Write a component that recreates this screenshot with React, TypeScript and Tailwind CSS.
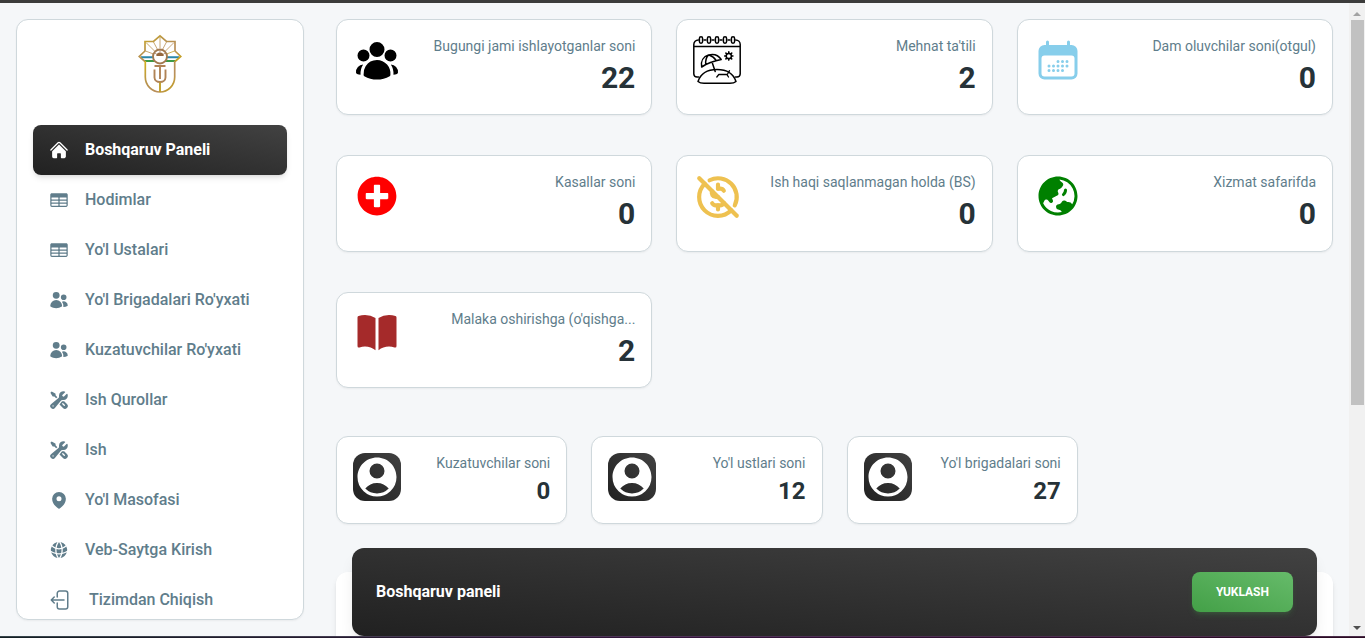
import React from "react";
import {
  HiHome,
  HiTableCells,
  HiUsers,
  HiWrenchScrewdriver,
  HiMapPin,
  HiUserGroup,
  HiCalendarDays,
  HiGlobeAsiaAustralia,
  HiBookOpen,
  HiUserCircle,
  HiGlobeAlt,
} from "react-icons/hi2";
import { FaPlusCircle } from "react-icons/fa";
import { TbCoinOff } from "react-icons/tb";

function Logo() {
  return (
    <svg width="44" height="60" viewBox="0 0 44 60" fill="none">
      <defs>
        <linearGradient id="gold" x1="0" y1="0" x2="1" y2="1">
          <stop offset="0" stopColor="#d2b01c" />
          <stop offset="0.35" stopColor="#b8934a" />
          <stop offset="0.7" stopColor="#b98f5c" />
          <stop offset="1" stopColor="#c9a70c" />
        </linearGradient>
      </defs>
      <path d="M3 23.200h13M28 23.200h13" stroke="#2a87ab" strokeWidth="2" />
      <path d="M6 27h11M27 27h11" stroke="#3d9b46" strokeWidth="2" />
      <g stroke="url(#gold)" strokeWidth="1.700">
        <path d="M7 27.500L1.200 22.500 7 17V7.500h8.500L22 1.800l6.500 5.700H37V17l5.800 5.500L37 27.500" />
        <path d="M7.300 27v16a14.700 15 0 0 0 29.400 0V27" />
        <path d="M22 2v12M15.500 8l4 7.500M28.500 8l-4 7.500M8 8.500l8.500 8.500M36 8.500L27.500 17M7.500 17l8 3M36.500 17l-8 3" strokeWidth="0.800" />
      </g>
      <circle cx="22" cy="22.500" r="7" fill="white" stroke="#a37a50" strokeWidth="1.900" />
      <path d="M18.300 22a3.700 3.500 0 0 1 7.400 0z" fill="#96683e" />
      <path d="M17 19l2 1.500M22 16v2.500M27 19l-2 1.500" stroke="#a77c58" strokeWidth="0.800" />
      <path d="M16.500 32h11M22 32v13M16.500 35.500v8a5.500 4.500 0 0 0 11 0v-8" stroke="#b08356" strokeWidth="1.900" />
      <path d="M22 48.500V58" stroke="#bf9f28" strokeWidth="1.900" />
    </svg>
  );
}

function VacationIcon() {
  const rings = [8, 16, 24, 32, 40];
  return (
    <svg width="48" height="48" viewBox="0 0 48 48" fill="none" stroke="#000" strokeWidth="1.500" strokeLinecap="round" strokeLinejoin="round">
      <path d="M5.500 41H4A3.200 3.200 0 0 1 .8 38V8.500a4.500 4.500 0 0 1 4.500-4.500M42.700 4a4.500 4.500 0 0 1 4.500 4.500V38A3.200 3.200 0 0 1 44 41h-1.500M.8 10.500h46.400M11 4h2M19 4h2M27 4h2M35 4h2" />
      {rings.map((x) => (
        <rect key={x} x={x - 1.600} y="0.800" width="3.200" height="6.400" rx="1.600" />
      ))}
      <path d="M8.700 31C7.500 25 10.500 20.500 15.500 19c5-1.300 10 .3 12.700 4.500l-5.200 1.300-5.500 1.700-4.700 2zM15.500 19c-2.300 2.500-3.200 5.500-2.700 9.200M16 19c3 1 5.500 2.800 7 5.300M19 26l3.200 9.500" />
      <path d="M5 45.500C7.500 38 14.500 33.500 24 33.500S40.500 38 43 45.500q-2 1.700-6 1.700H11q-4 0-6-1.700z" />
      <path d="M23.800 41l2-2.500h8.500l2.200-3.800M34 38.700l1.500 2.300" strokeWidth="1.300" />
      <circle cx="35.800" cy="20" r="2.600" />
      <path d="M35.800 15.900v1M35.800 23.100v1M31.700 20h1M38.900 20h1M32.900 17.100l.7.700M38 22.200l.7.700M38.700 17.100l-.7.700M33.600 22.200l-.7.700" strokeWidth="1.600" />
    </svg>
  );
}

function ExitIcon() {
  return (
    <svg width="24" height="24" viewBox="0 0 24 24" fill="none" stroke="currentColor" strokeWidth="1.500" strokeLinecap="round" strokeLinejoin="round">
      <path d="M8.250 9V5.250A2.250 2.250 0 0 1 10.500 3h6a2.250 2.250 0 0 1 2.250 2.250v13.500A2.250 2.250 0 0 1 16.500 21h-6a2.250 2.250 0 0 1-2.250-2.250V15m-3 0-3-3m0 0 3-3m-3 3H15" />
    </svg>
  );
}

const navItems = [
  { label: "Hodimlar", icon: <HiTableCells size={20} /> },
  { label: "Yo'l Ustalari", icon: <HiTableCells size={20} /> },
  { label: "Yo'l Brigadalari Ro'yxati", icon: <HiUsers size={20} /> },
  { label: "Kuzatuvchilar Ro'yxati", icon: <HiUsers size={20} /> },
  { label: "Ish Qurollar", icon: <HiWrenchScrewdriver size={20} /> },
  { label: "Ish", icon: <HiWrenchScrewdriver size={20} /> },
  { label: "Yo'l Masofasi", icon: <HiMapPin size={20} /> },
  { label: "Veb-Saytga Kirish", icon: <HiGlobeAlt size={20} /> },
];

const stats = [
  { label: "Bugungi jami ishlayotganlar soni", value: 22, icon: <HiUserGroup size={48} /> },
  { label: "Mehnat ta'tili", value: 2, icon: <VacationIcon /> },
  { label: "Dam oluvchilar soni(otgul)", value: 0, icon: <HiCalendarDays size={48} color="skyblue" /> },
  { label: "Kasallar soni", value: 0, icon: <FaPlusCircle size={40} color="red" /> },
  { label: "Ish haqi saqlanmagan holda (BS)", value: 0, icon: <TbCoinOff size={50} color="#eec150" /> },
  { label: "Xizmat safarifda", value: 0, icon: <HiGlobeAsiaAustralia size={48} color="green" /> },
  { label: "Malaka oshirishga (o'qishga...", value: 2, icon: <HiBookOpen size={48} color="brown" /> },
];

const totals = [
  { label: "Kuzatuvchilar soni", value: 0 },
  { label: "Yo'l ustlari soni", value: 12 },
  { label: "Yo'l brigadalari soni", value: 27 },
];

function Sidebar() {
  return (
    <aside className="ml-4 mt-4 h-[601px] w-72 shrink-0 overflow-hidden rounded-xl border border-[#cfd8dc] bg-white shadow-[0_1px_2px_0_rgba(0,0,0,0.05)]">
      <div className="flex h-[105px] justify-center pt-[14px]">
        <Logo />
      </div>
      <nav className="px-4">
        <div className="flex h-[50px] items-center gap-4 rounded-lg bg-linear-to-tr from-[#212121] to-[#424242] px-4 text-white shadow-md shadow-black/10">
          <HiHome size={20} />
          <span className="text-base font-bold tracking-[-0.03px]">Boshqaruv Paneli</span>
        </div>
        {navItems.map((item) => (
          <div key={item.label} className="flex h-[50px] items-center gap-4 px-4 text-[#607d8b]">
            {item.icon}
            <span className="text-base font-medium">{item.label}</span>
          </div>
        ))}
        <div className="flex h-[50px] items-center gap-4 px-4 text-[#607d8b]">
          <ExitIcon />
          <span className="text-base font-medium">Tizimdan Chiqish</span>
        </div>
      </nav>
    </aside>
  );
}

export default function App() {
  return (
    <div className="flex h-[638px] w-[1365px] flex-col overflow-hidden bg-[#f5f7f9] font-['Roboto',sans-serif]">
      <div className="h-[3px] shrink-0 bg-[#3c3c3b]" />
      <div className="flex h-[633px] shrink-0 overflow-hidden">
        <Sidebar />
        <main className="ml-8 mt-4 w-[997px] shrink-0">
          <div className="grid grid-cols-3 gap-x-6 gap-y-10">
            {stats.map((s) => (
              <div key={s.label} className="flex h-[96.250px] items-start justify-between rounded-xl border border-[#cfd8dc] bg-white p-4 shadow-[0_1px_2px_0_rgba(0,0,0,0.05)]">
                <div className="flex min-h-12 min-w-12 shrink-0 items-center justify-center">{s.icon}</div>
                <div className="text-right">
                  <p className="text-sm leading-normal text-[#607d8b]">{s.label}</p>
                  <p className="text-3xl leading-snug font-bold text-[#263238]">{s.value}</p>
                </div>
              </div>
            ))}
          </div>
          <div className="mt-12 grid grid-cols-4 gap-x-6">
            {totals.map((t) => (
              <div key={t.label} className="flex justify-between rounded-xl border border-[#cfd8dc] bg-white p-4 shadow-[0_1px_2px_0_rgba(0,0,0,0.05)]">
                <div className="flex size-12 items-center justify-center rounded-xl bg-linear-to-tr from-[#212121] to-[#424242]">
                  <HiUserCircle size={48} color="white" />
                </div>
                <div className="text-right">
                  <p className="text-sm leading-normal text-[#607d8b]">{t.label}</p>
                  <p className="mt-px text-2xl leading-8 font-bold text-[#263238]">{t.value}</p>
                </div>
              </div>
            ))}
          </div>
          <div className="mt-12 h-40 rounded-xl bg-white px-4 shadow-md">
            <div className="flex h-[88px] -translate-y-6 items-center justify-between rounded-xl bg-linear-to-tr from-[#212121] to-[#424242] px-6 shadow-lg shadow-black/10">
              <h6 className="text-base font-bold text-white">Boshqaruv paneli</h6>
              <button className="h-10 w-[101px] rounded-lg bg-linear-to-tr from-[#43a047] to-[#66bb6a] text-xs font-bold text-white shadow-md shadow-[#4caf50]/20">
                YUKLASH
              </button>
            </div>
          </div>
        </main>
        <div className="ml-4 flex w-4 shrink-0 flex-col items-center bg-[#f1f1f1]">
          <div className="flex h-[17px] items-center pt-1">
            <svg width="8" height="4" viewBox="0 0 8 4" fill="#a3a3a3"><path d="M0 4L4 0l4 4z" /></svg>
          </div>
          <div className="ml-px h-[385px] w-[13px] bg-[#c1c1c1]" />
          <div className="mt-auto flex h-[17px] items-center">
            <svg width="8" height="4" viewBox="0 0 8 4" fill="#505050"><path d="M0 0l4 4 4-4z" /></svg>
          </div>
        </div>
      </div>
      <div className="h-px shrink-0 bg-linear-to-r from-[#36454a] via-[#4f3358] to-[#4a2c48]" />
      <div className="h-px shrink-0 bg-linear-to-r from-[#141f24] via-[#34123c] to-[#2a0a22]" />
    </div>
  );
}
